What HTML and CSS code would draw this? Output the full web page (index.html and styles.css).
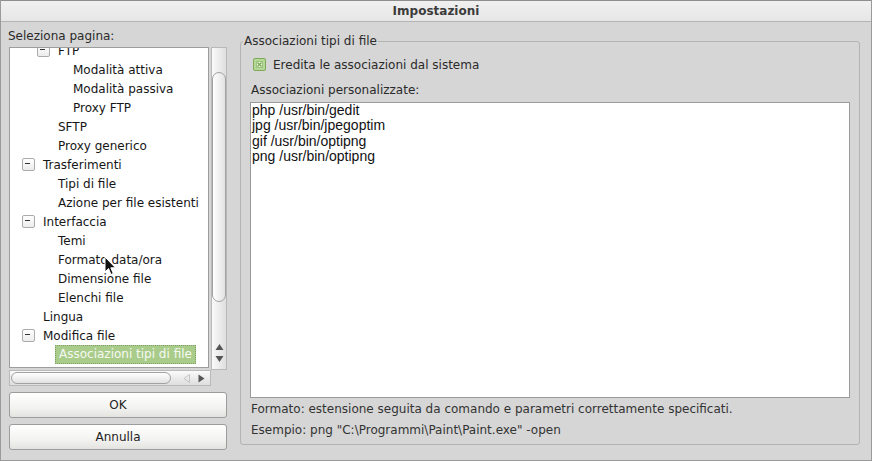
FILE: index.html
```html
<!DOCTYPE html>
<html lang="it">
<head>
<meta charset="utf-8">
<title>Impostazioni</title>
<link rel="stylesheet" href="styles.css">
</head>
<body>
<div class="window">
  <header class="titlebar">Impostazioni</header>
  <div class="content">
    <aside class="sidebar">
      <div class="side-label">Seleziona pagina:</div>
      <div class="treeframe">
        <div class="tree-row">
          <div class="tree">
            <ul class="tree-list">
              <li class="node lvl2"><span class="exp open"></span><span class="txt">FTP</span></li>
              <li class="node lvl3"><span class="exp"></span><span class="txt">Modalità attiva</span></li>
              <li class="node lvl3"><span class="exp"></span><span class="txt">Modalità passiva</span></li>
              <li class="node lvl3"><span class="exp"></span><span class="txt">Proxy FTP</span></li>
              <li class="node lvl2"><span class="exp"></span><span class="txt">SFTP</span></li>
              <li class="node lvl2"><span class="exp"></span><span class="txt">Proxy generico</span></li>
              <li class="node lvl1"><span class="exp open"></span><span class="txt">Trasferimenti</span></li>
              <li class="node lvl2"><span class="exp"></span><span class="txt">Tipi di file</span></li>
              <li class="node lvl2"><span class="exp"></span><span class="txt">Azione per file esistenti</span></li>
              <li class="node lvl1"><span class="exp open"></span><span class="txt">Interfaccia</span></li>
              <li class="node lvl2"><span class="exp"></span><span class="txt">Temi</span></li>
              <li class="node lvl2"><span class="exp"></span><span class="txt">Formato data/ora</span></li>
              <li class="node lvl2"><span class="exp"></span><span class="txt">Dimensione file</span></li>
              <li class="node lvl2"><span class="exp"></span><span class="txt">Elenchi file</span></li>
              <li class="node lvl1"><span class="exp"></span><span class="txt">Lingua</span></li>
              <li class="node lvl1"><span class="exp open"></span><span class="txt">Modifica file</span></li>
              <li class="node lvl2"><span class="exp"></span><span class="txt selected">Associazioni tipi di file</span></li>
            </ul>
          </div>
          <div class="vscroll">
            <div class="vthumb"></div>
            <div class="varrows">
              <svg width="9" height="20" viewBox="0 0 9 20"><path d="M4.5 1 L8.5 7 L0.5 7 Z" fill="#555"/><path d="M0.5 13 L8.5 13 L4.5 19 Z" fill="#555"/></svg>
            </div>
          </div>
        </div>
        <div class="hscroll">
          <div class="hthumb"></div>
          <div class="harrows">
            <svg width="22" height="9" viewBox="0 0 22 9"><path d="M6.5 0.5 L6.5 8.5 L1 4.5 Z" fill="none" stroke="#c4c4c4"/><path d="M15.5 0.5 L21.5 4.5 L15.5 8.5 Z" fill="#555"/></svg>
          </div>
        </div>
      </div>
      <button class="btn btn-first">OK</button>
      <button class="btn">Annulla</button>
    </aside>
    <main class="panel">
      <fieldset class="group">
        <legend class="group-title">Associazioni tipi di file</legend>
        <div class="group-body">
          <label class="check-row">
            <svg class="checkbox" width="13" height="13" viewBox="0 0 13 13">
              <rect x="0.5" y="0.5" width="12" height="12" rx="1.5" fill="#b5d797" stroke="#7fab58"/>
              <rect x="3.5" y="3.5" width="6" height="6" fill="#eef6e6" stroke="#9cc47a"/>
              <path d="M4.5 4.5 L8.5 8.5 M8.5 4.5 L4.5 8.5" stroke="#7aa852" stroke-width="1.3"/>
            </svg>
            <span>Eredita le associazioni dal sistema</span>
          </label>
          <div class="field-label">Associazioni personalizzate:</div>
          <div class="editor">
            <div>php /usr/bin/gedit</div>
            <div>jpg /usr/bin/jpegoptim</div>
            <div>gif /usr/bin/optipng</div>
            <div>png /usr/bin/optipng</div>
          </div>
          <p class="hint">Formato: estensione seguita da comando e parametri correttamente specificati.</p>
          <p class="hint hint-last">Esempio: png "C:\Programmi\Paint\Paint.exe" -open</p>
        </div>
      </fieldset>
    </main>
  </div>
  <svg class="pointer" width="13" height="20" viewBox="0 0 13 20">
    <path d="M1 1 L1 16 L4.5 12.5 L7 18.5 L9.3 17.5 L6.8 11.8 L11.5 11.8 Z" fill="#111" stroke="#fff" stroke-width="1" stroke-linejoin="round"/>
  </svg>
</div>
</body>
</html>
```

FILE: styles.css
```css
* {
  box-sizing: border-box;
}

html, body {
  margin: 0;
  padding: 0;
}

body {
  font-family: "DejaVu Sans", sans-serif;
  font-size: 12px;
  color: #222;
  background: #d6d6d6;
}

.window {
  position: relative;
  width: 872px;
  height: 461px;
  background: #d6d6d6;
  border: 1px solid #9a9a9a;
  border-top: none;
  overflow: hidden;
}

.titlebar {
  height: 22px;
  border-top: 1px solid #8e8e8e;
  border-bottom: 1px solid #b4b4b4;
  background: linear-gradient(#f0f0f0, #e6e6e6);
  font-weight: bold;
  color: #3c3c3c;
  text-align: center;
  line-height: 20px;
}

.content {
  display: flex;
  gap: 13px;
  padding: 0 11px 0 8px;
}

/* left column: page tree and dialog buttons */
.sidebar {
  width: 218px;
  padding-top: 7px;
  display: flex;
  flex-direction: column;
}

.side-label {
  line-height: 15px;
  height: 15px;
  margin-left: -1px;
  color: #2a2a2a;
}

.treeframe {
  margin-top: 3px;
}

.tree-row {
  display: flex;
  align-items: flex-start;
  gap: 2px;
}

.tree {
  width: 200px;
  height: 321px;
  background: #fff;
  border: 1px solid #9d9d9d;
  overflow: hidden;
}

.tree-list {
  list-style: none;
  margin: -7px 0 0;
  padding: 0;
}

.node {
  display: flex;
  align-items: center;
  height: 19px;
  white-space: nowrap;
  color: #161616;
}

.lvl1 { padding-left: 12px; }
.lvl2 { padding-left: 27px; }
.lvl3 { padding-left: 42px; }

.exp {
  flex: none;
  width: 21px;
  height: 11px;
  position: relative;
  top: -1px;
}

.exp.open::before {
  content: "";
  position: absolute;
  left: 0;
  top: 0;
  width: 11px;
  height: 11px;
  border: 1px solid #ababab;
  border-radius: 2px;
  background: linear-gradient(#ffffff, #ececec);
}

.exp.open::after {
  content: "";
  position: absolute;
  left: 3px;
  top: 5px;
  width: 5px;
  height: 1px;
  background: #333;
}

.txt.selected {
  margin-left: -3px;
  padding: 0 3px;
  height: 19px;
  line-height: 17px;
  background: #a9cc8a;
  border: 1px dotted #7f9d66;
  color: #f6f8f2;
}

.vscroll {
  position: relative;
  width: 16px;
  height: 323px;
  border: 1px solid #b9b9b9;
  background: linear-gradient(to right, #fafafa, #dedede);
}

.vthumb {
  position: absolute;
  left: 0;
  top: 24px;
  width: 14px;
  height: 230px;
  border: 1px solid #a2a2a2;
  border-radius: 7px;
  background: linear-gradient(to right, #ffffff, #e2e2e2);
}

.varrows {
  position: absolute;
  left: 3px;
  bottom: 6px;
  line-height: 0;
}

.hscroll {
  width: 202px;
  height: 16px;
  border: 1px solid #b9b9b9;
  background: linear-gradient(#fafafa, #dedede);
  display: flex;
  align-items: center;
  padding: 0 5px 0 1px;
}

.hthumb {
  width: 160px;
  height: 12px;
  border: 1px solid #a2a2a2;
  border-radius: 6px;
  background: linear-gradient(#ffffff, #e2e2e2);
}

.harrows {
  margin-left: auto;
  line-height: 0;
}

.btn {
  display: block;
  width: 218px;
  height: 26px;
  padding: 0;
  margin: 0;
  font: inherit;
  color: #222;
  border: 1px solid #9c9c9c;
  border-radius: 3px;
  background: linear-gradient(#ffffff, #f3f3f1 60%, #e3e3e0);
  margin-top: 6px;
}

.btn-first {
  margin-top: 6px;
}

/* right column: association settings */
.panel {
  width: 620px;
  padding-top: 12px;
}

.group {
  margin: 0;
  padding: 0;
  min-width: 0;
  border: 1px solid #b3b3b3;
  border-radius: 3px;
}

.group-title {
  margin-left: 2px;
  padding: 0 1px;
  line-height: 14px;
  color: #2a2a2a;
}

.group-body {
  padding: 8px 9px 7px;
}

.check-row {
  display: flex;
  align-items: center;
  height: 17px;
  padding-left: 3px;
  gap: 7px;
  color: #2a2a2a;
}

.checkbox {
  flex: none;
}

.field-label {
  margin-top: 10px;
  line-height: 15px;
  padding-left: 1px;
  color: #2a2a2a;
}

.editor {
  margin-top: 4px;
  height: 296px;
  background: #fff;
  border: 1px solid #9a9a9a;
  padding: 0 1px;
  font-family: "Liberation Sans", Arial, sans-serif;
  font-size: 14px;
  line-height: 15.33px;
  color: #111;
}

.hint {
  margin: 4px 0 0;
  padding-left: 1px;
  line-height: 14px;
  color: #333;
}

.hint-last {
  margin-top: 7px;
}

.pointer {
  position: absolute;
  left: 103px;
  top: 256px;
}
```
